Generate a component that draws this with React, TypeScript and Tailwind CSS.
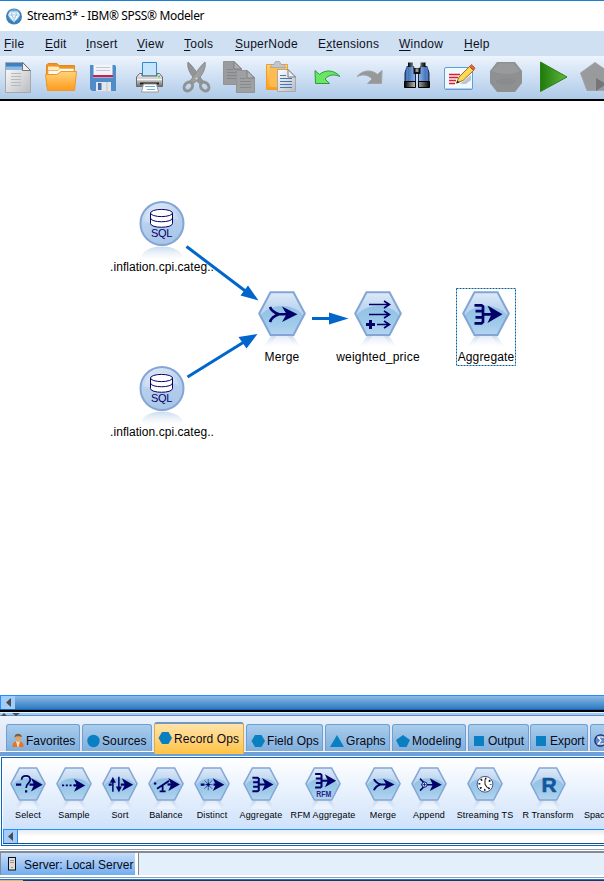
import React from "react";

type Kids = { children?: React.ReactNode };

/* Shared gradients, referenced by id from every drawing on the page. */
function Gradients() {
  return (
    <svg width="0" height="0" className="absolute" aria-hidden="true">
      <defs>
        <linearGradient id="body" x1="0" y1="0" x2="0" y2="1">
          <stop offset="0" stopColor="#dfebf9" />
          <stop offset="0.35" stopColor="#c0d7f0" />
          <stop offset="1" stopColor="#b9d3f0" />
        </linearGradient>
        <linearGradient id="ball" x1="0.3" y1="0" x2="0.6" y2="1">
          <stop offset="0" stopColor="#dde8f8" />
          <stop offset="0.45" stopColor="#b6cfec" />
          <stop offset="1" stopColor="#a9c6e8" />
        </linearGradient>
        <linearGradient id="pool" x1="0" y1="0" x2="0" y2="1">
          <stop offset="0" stopColor="#8fc1e4" />
          <stop offset="0.6" stopColor="#a0cbea" />
          <stop offset="1" stopColor="#b9d5f0" />
        </linearGradient>
        <linearGradient id="mirror" x1="0" y1="0" x2="0" y2="1">
          <stop offset="0" stopColor="#b9cfe8" stopOpacity="0.75" />
          <stop offset="1" stopColor="#dfeaf6" stopOpacity="0" />
        </linearGradient>
        <linearGradient id="paper" x1="0" y1="0" x2="1" y2="1">
          <stop offset="0" stopColor="#ffffff" />
          <stop offset="1" stopColor="#b9bcc0" />
        </linearGradient>
        <linearGradient id="orange" x1="0" y1="0" x2="0" y2="1">
          <stop offset="0" stopColor="#ffd47c" />
          <stop offset="1" stopColor="#ff9a1c" />
        </linearGradient>
        <linearGradient id="green" x1="0" y1="0" x2="1" y2="0">
          <stop offset="0" stopColor="#1e7a0c" />
          <stop offset="1" stopColor="#62b840" />
        </linearGradient>
        <linearGradient id="tube" x1="0" y1="0" x2="1" y2="0">
          <stop offset="0" stopColor="#2a559c" />
          <stop offset="0.5" stopColor="#9cc6f8" />
          <stop offset="1" stopColor="#2a559c" />
        </linearGradient>
        <linearGradient id="rubber" x1="0" y1="0" x2="1" y2="0">
          <stop offset="0" stopColor="#000" />
          <stop offset="0.45" stopColor="#c8c8c8" />
          <stop offset="1" stopColor="#000" />
        </linearGradient>
        <linearGradient id="metal" x1="0" y1="0" x2="0" y2="1">
          <stop offset="0" stopColor="#f3f3f3" />
          <stop offset="0.6" stopColor="#b5b5b5" />
          <stop offset="1" stopColor="#6e6e6e" />
        </linearGradient>
        <clipPath id="hexclip">
          <path d="M12.5 1.2H35.5L46.8 22.5L35.5 44H12.5L1.2 22.5Z" />
        </clipPath>
      </defs>
    </svg>
  );
}

/* ---------- title bar and menu ---------- */

function TitleBar() {
  return (
    <header className="flex h-[31px] shrink-0 items-center border-t border-[#1a7fd6] bg-white pl-1.5">
      <svg width="17" height="17" viewBox="0 0 17 17">
        <circle cx="8" cy="8.5" r="8" fill="#3d7fb8" />
        <circle cx="8" cy="7" r="6" fill="#6aa5d2" />
        <path d="M4.3 3.5H11.7L14 7L8 14.5L2 7Z" fill="#f2f9fd" />
        <path d="M2 7H14M5 3.5L8 14M11 3.5L8 14M8 3.5L5 7L8 10L11 7Z" stroke="#8dbbdd" strokeWidth="0.6" fill="none" />
      </svg>
      <h1 className="ml-1 whitespace-pre font-['Noto_Sans','Open_Sans',sans-serif] text-[12px] leading-none tracking-[-0.34px] text-black">
        Stream3* - IBM® SPSS® Modeler
      </h1>
    </header>
  );
}

function MenuBar() {
  return (
    <nav className="flex h-[25px] shrink-0 items-center bg-[#cee0f2] pl-1 text-[12px] leading-none tracking-[0.25px] text-[#10101c]">
      <span className="w-[41px]"><u className="underline-offset-2">F</u>ile</span>
      <span className="w-[41px]"><u className="underline-offset-2">E</u>dit</span>
      <span className="w-[51px]"><u className="underline-offset-2">I</u>nsert</span>
      <span className="w-[47px]"><u className="underline-offset-2">V</u>iew</span>
      <span className="w-[51px]"><u className="underline-offset-2">T</u>ools</span>
      <span className="w-[83px]"><u className="underline-offset-2">S</u>uperNode</span>
      <span className="w-[81px]">E<u className="underline-offset-2">x</u>tensions</span>
      <span className="w-[65px]"><u className="underline-offset-2">W</u>indow</span>
      <span><u className="underline-offset-2">H</u>elp</span>
    </nav>
  );
}

/* ---------- toolbar ---------- */

/* One toolbar cell; drawings share the toolbar's own x axis. */
function Tool({ x, w, children }: Kids & { x: number; w: number }) {
  return (
    <svg width={w} height={43} viewBox={`${x} 56 ${w} 43`} className="shrink-0">
      {children}
    </svg>
  );
}

function Toolbar() {
  return (
    <div className="flex h-[45px] shrink-0 overflow-hidden border-b-2 border-black bg-linear-to-b from-[#edf4fd] to-[#aecae8]">
      <Tool x={0} w={38}>
        <path d="M5.5 62.5H23L30.5 70.5V92.5H5.5Z" fill="url(#paper)" stroke="#a4a9ae" />
        <path d="M6 63H22.5V70H6Z" fill="#3f7fc4" />
        <path d="M6 66.5H22.5V70H6Z" fill="#8db9e4" />
        <path d="M22.5 62.5V70.5H30.5Z" fill="#f1f1f1" stroke="#666" strokeWidth="0.9" />
        <path d="M11 73.5H21M11 76.5H21M11 79.5H21M11 82.5H21M11 85.5H21" stroke="#b9b9b9" />
      </Tool>
      <Tool x={38} w={46}>
        <path d="M46.5 86V65L48 63.5H57L59 65.5H74.5V84Z" fill="#f0941c" stroke="#d98a20" />
        <path d="M48 66.5H58L60 68.5H74V76H48Z" fill="#ffe9bd" />
        <path d="M48 70.5H58L60 68.5H74V76H48Z" fill="#fffaf0" stroke="#e8a850" strokeWidth="0.8" />
        <path d="M45.5 74.5H57L61 71.5H76.5L74.5 90.5H47.5Z" fill="url(#orange)" stroke="#f0972a" />
      </Tool>
      <Tool x={84} w={42}>
        <path d="M90 65H115L116 66.5V91H92L90 89Z" fill="#4f8cc8" />
        <path d="M93.5 64.5H112.5V76.5H93.5Z" fill="#f1f3f8" />
        <path d="M96 67.5H110M96 70.5H110" stroke="#c2c8d2" />
        <path d="M93 76H113" stroke="#db1648" strokeWidth="2" />
        <path d="M93 77.5H113" stroke="#8fb3da" />
        <path d="M96 82H111V91H96Z" fill="#e4e6ec" />
        <path d="M98 83H101.5V90H98Z" fill="#416fae" />
        <path d="M107 82V91" stroke="#bfc3cb" />
      </Tool>
      <Tool x={126} w={47}>
        <path d="M142.5 62.5H156.5V76H142.5Z" fill="#c4e5fc" stroke="#2f8ad2" />
        <path d="M136.5 77L139.5 73.5H142V76H157V73.5H159.5L162.5 77V86.5H136.5Z" fill="url(#metal)" stroke="#6a6a6a" />
        <path d="M137 79.5H162" stroke="#f4f4f4" strokeWidth="1.5" />
        <path d="M140 83.5H159" stroke="#222" strokeWidth="2" />
        <path d="M143.5 84H156.5L158.5 92H141.5Z" fill="#fff" stroke="#9a9a9a" />
        <path d="M145 86.5H155M147 89.5H155" stroke="#71aee0" />
        <circle cx="159" cy="76.5" r="1" fill="#4cc83c" />
      </Tool>
      <Tool x={173} w={43}>
        <path d="M188 62C186.5 68 191 77 199.5 83.5L203 81C199 76 193 66 188 62Z" fill="#929496" stroke="#8b8d8f" strokeLinejoin="round" />
        <path d="M205 62C206.5 68 202 77 193.5 83.5L190 81C194 76 200 66 205 62Z" fill="#9c9ea0" stroke="#8b8d8f" strokeLinejoin="round" />
        <ellipse cx="188.3" cy="86.5" rx="3.8" ry="4.8" fill="none" stroke="#909294" strokeWidth="3" transform="rotate(38 188.3 86.5)" />
        <ellipse cx="204.7" cy="86.5" rx="3.8" ry="4.8" fill="none" stroke="#909294" strokeWidth="3" transform="rotate(-38 204.7 86.5)" />
        <circle cx="196.5" cy="78.5" r="1" fill="#ddd" />
      </Tool>
      <Tool x={216} w={44}>
        <path d="M223.5 61.5H234L241.5 69V84.5H223.5Z" fill="#9a9b9c" stroke="#929394" />
        <path d="M234 61.5V69H241.5Z" fill="#aeafb0" stroke="#7d7f81" />
        <path d="M227 69.5H233M227 72.5H236M227 75.5H236M227 78.5H236" stroke="#858687" />
        <path d="M236.5 70.5H247L254.5 78V92.5H236.5Z" fill="#9fa0a1" stroke="#929394" />
        <path d="M247 70.5V78H254.5Z" fill="#b2b3b4" stroke="#7d7f81" />
        <path d="M240 78.5H246M240 81.5H251M240 84.5H251M240 87.5H251" stroke="#88898a" />
      </Tool>
      <Tool x={260} w={42}>
        <path d="M266.5 64.5H287.5V89.5H266.5Z" fill="url(#orange)" stroke="#f59a22" />
        <path d="M269.5 67.5H285V87H269.5Z" fill="#ffbb50" />
        <path d="M270 67.5L272 64.5H274L275.5 61.5H279.5L281 64.5H283.5L286 67.5Z" fill="#c3c6c6" stroke="#a2a5a6" strokeWidth="0.8" />
        <path d="M277.5 69.5H288L295.5 77V91.5H277.5Z" fill="url(#paper)" stroke="#a5a9ae" />
        <path d="M288 69.5V77H295.5Z" fill="#eee" stroke="#777d84" />
        <path d="M280 75.5H286M280 78.5H292M280 81.5H292M280 84.5H292M280 87.5H292" stroke="#4277bb" />
      </Tool>
      <Tool x={302} w={48}>
        <path d="M315 70.5L319.5 74.5C325 69.5 334 69.5 340 76.5C334 74 329 74.5 325 79L329.5 83.5H315.5Z" fill="#69e662" stroke="#2f9a43" strokeLinejoin="round" />
      </Tool>
      <Tool x={350} w={43}>
        <path d="M382 70.5L377.5 74.5C372 69.5 363 69.5 357 76.5C363 74 368 74.5 372 79L367.5 83.5H381.5Z" fill="#969899" stroke="#a0a2a4" strokeLinejoin="round" />
      </Tool>
      <Tool x={393} w={44}>
        <path d="M407 66.5H413.5L415.5 73V82H405V73ZM420.5 66.5H427L429 73V82H418.5V73Z" fill="url(#tube)" stroke="#1a2744" />
        <path d="M407 66.5V81M427 66.5V81" stroke="#5b93df" />
        <path d="M413.5 68H420.5V74H413.5Z" fill="#111" />
        <path d="M415.5 68.5H418.5V72H415.5Z" fill="#999" />
        <path d="M408 62.5H413V67H408ZM420.5 62.5H425.5V67H420.5Z" fill="url(#rubber)" />
        <path d="M404.5 81.5H415.5V87.5H404.5ZM418.5 81.5H429.5V87.5H418.5Z" fill="url(#rubber)" stroke="#000" />
      </Tool>
      <Tool x={437} w={45}>
        <rect x="444.5" y="67.5" width="28" height="22" rx="1.5" fill="#f2f8ff" stroke="#5b9fd8" />
        <path d="M446 88.5H472" stroke="#b6cce0" />
        <path d="M449 74.5H460M449 77.5H458M449 80.5H456M449 83.5H455" stroke="#e01d29" strokeWidth="1.3" />
        <path d="M460 84L471 75V80L466 84Z" fill="#a7afb9" opacity="0.7" />
        <path d="M456.5 83L459 77L469.5 66.5L473.5 70.5L463 80.5Z" fill="#ffd755" stroke="#8a650f" strokeWidth="0.9" />
        <path d="M469.5 66.5L471.5 64.5L475 68L473.5 70.5Z" fill="#e5653f" stroke="#a6441f" strokeWidth="0.7" />
        <path d="M456.5 83.5L457.5 80.5L459.5 82.5Z" fill="#222" />
      </Tool>
      <Tool x={482} w={48}>
        <path d="M497 62H515L522 71V83L515 92H497L490 83V71Z" fill="#8f9091" />
        <path d="M498 63.5H514L520 71C512 75 500 75 492 71Z" fill="#999a9b" />
        <path d="M496 81C501 77.5 511 77.5 516 81C515 86 497 86 496 81Z" fill="#8a8b8c" />
      </Tool>
      <Tool x={530} w={44}>
        <path d="M540.5 62L567 77L540.5 91.5Z" fill="url(#green)" stroke="#258413" strokeLinejoin="round" />
      </Tool>
      <Tool x={574} w={30}>
        <path d="M595 62.5L610 73L604 90.5H587L580.5 73Z" fill="#999a9c" stroke="#a0a2a4" strokeLinejoin="round" />
        <path d="M596 78L606 84L596 91Z" fill="#747678" />
      </Tool>
    </div>
  );
}

/* ---------- nodes ---------- */

const NAVY = "#04006a";

type Glyph =
  | "select" | "sample" | "sort" | "balance" | "distinct" | "aggregate"
  | "rfm" | "merge" | "append" | "clock" | "r" | "derive";

/* Four prongs joined by a spine, flowing into one arrow. */
function ProngArrow() {
  return (
    <g>
      <path d="M12.5 14.3H19.5L21 15.5V31L19.5 32.3H12.5M13.5 20.2H21M13.5 26.4H21M21 23.3H32" fill="none" stroke={NAVY} strokeWidth="2.7" />
      <path d="M25.5 14.5L40.5 23.3L25.5 32L29.5 23.3Z" fill={NAVY} />
    </g>
  );
}

function GlyphArt({ kind }: { kind: Glyph }) {
  switch (kind) {
    case "aggregate":
      return <ProngArrow />;
    case "merge":
      return (
        <g>
          <path d="M12 16C13.5 20 17 22 21 23.3C17 24.5 13.5 26.5 12 31M19 23.3H32" fill="none" stroke={NAVY} strokeWidth="2.6" />
          <path d="M24 15.5L39.5 23.3L24 31L28.5 23.3Z" fill={NAVY} />
        </g>
      );
    case "derive":
      return (
        <g fill="none" stroke={NAVY} strokeWidth="1.6">
          <path d="M15 13.5H35M30 10L35.5 13.5L30 17M15 23.5H35M30 20L35.5 23.5L30 27M23 33.5H35M30 30L35.5 33.5L30 37" />
          <path d="M12 33.5H21M16.5 29V38" strokeWidth="3" />
        </g>
      );
    case "select":
      return (
        <g>
          <path d="M8 23.5H15M26 23.5H35" stroke={NAVY} strokeWidth="2.8" />
          <path d="M15.5 17C15.5 10 27 10 27 17C27 21.5 21.5 21.5 21.5 28" fill="none" stroke={NAVY} strokeWidth="2.3" />
          <path d="M20 31H23V34H20Z" fill={NAVY} />
          <path d="M28 14.5L43.5 23.5L28 32.5L32 23.5Z" fill={NAVY} />
        </g>
      );
    case "sample":
      return (
        <g>
          <path d="M8 24.5H25" stroke={NAVY} strokeWidth="2.6" strokeDasharray="2.8 2.2" />
          <path d="M24 24.5H34" stroke={NAVY} strokeWidth="3" />
          <path d="M24 16L39 24.5L24 33L28 24.5Z" fill={NAVY} />
        </g>
      );
    case "sort":
      return (
        <g>
          <path d="M9 23.5H13M25 23.5H34" stroke={NAVY} strokeWidth="3" />
          <path d="M14.5 33V18M22.5 13V30" stroke={NAVY} strokeWidth="2" />
          <path d="M10.5 21L14.5 13L18.5 21ZM18.5 26L22.5 34L26.5 26Z" fill={NAVY} />
          <path d="M26.5 15L41.5 23.5L26.5 32L30.5 23.5Z" fill={NAVY} />
        </g>
      );
    case "balance":
      return (
        <g>
          <circle cx="9.5" cy="22" r="1.7" fill={NAVY} />
          <path d="M12 29L28 18.5M19.5 25V32M15.5 32.5H23.5" fill="none" stroke={NAVY} strokeWidth="2.4" />
          <path d="M26 23.3H34" stroke={NAVY} strokeWidth="3" />
          <path d="M27 14.5L42.5 23.3L27 32L31 23.3Z" fill={NAVY} />
        </g>
      );
    case "distinct":
      return (
        <g>
          <path d="M9 23.5H14M26 23.5H34" stroke={NAVY} strokeWidth="2.8" />
          <path d="M19 16V31M13 23.5H25M14 18L24 29M24 18L14 29" stroke="#3c55a6" strokeWidth="1.3" />
          <path d="M19 21V26M16.5 23.5H21.5" stroke={NAVY} strokeWidth="1.5" />
          <path d="M25 15L40.5 23.5L25 32L29 23.5Z" fill={NAVY} />
        </g>
      );
    case "rfm":
      return (
        <g>
          <g transform="translate(1 -5)">
            <ProngArrow />
          </g>
          <text x="25" y="40" textAnchor="middle" fontSize="11.5" fontWeight="bold" fill="#2a1f8c" textLength="20" lengthAdjust="spacingAndGlyphs">RFM</text>
        </g>
      );
    case "append":
      return (
        <g>
          <path d="M12 15.5L20 23.5L12 31.5M14 23.5H34" fill="none" stroke={NAVY} strokeWidth="2" />
          <circle cx="18" cy="23.5" r="3.5" fill="#dcebf8" stroke={NAVY} strokeWidth="1.2" />
          <path d="M18 21V26M15.5 23.5H20.5" stroke={NAVY} strokeWidth="1" />
          <path d="M25 15L41 23.5L25 32L29 23.5Z" fill={NAVY} />
        </g>
      );
    case "clock":
      return (
        <g>
          <circle cx="24" cy="23" r="10.5" fill="#fff" stroke="#3c4386" strokeWidth="1.2" />
          <circle cx="24" cy="23" r="7.5" fill="none" stroke="#111" strokeWidth="2.6" strokeDasharray="2 3.89" strokeDashoffset="1" />
          <path d="M24 16.5V23L27.5 28" fill="none" stroke="#222" strokeWidth="1.4" />
        </g>
      );
    case "r":
      return (
        <text x="25.5" y="33" textAnchor="middle" fontSize="28" fontWeight="bold" fill="#14569c" stroke="#14569c" strokeWidth="0.7">R</text>
      );
  }
}

function HexNode({ kind, width = 48 }: { kind: Glyph; width?: number }) {
  return (
    <svg width={width} height={(width * 56) / 48} viewBox="0 0 48 56" className="shrink-0">
      <path d="M13 45H35L43 56H5Z" fill="url(#mirror)" />
      <path d="M18 45H30L37 56H11Z" fill="#fff" opacity="0.45" />
      <path d="M12.5 1.2H35.5L46.8 22.5L35.5 44H12.5L1.2 22.5Z" fill="url(#body)" />
      <ellipse cx="24" cy="30" rx="23" ry="15" fill="url(#pool)" clipPath="url(#hexclip)" />
      <path d="M12.5 1.2H35.5L46.8 22.5L35.5 44H12.5L1.2 22.5Z" fill="none" stroke="#83a5d6" strokeWidth="2" />
      <GlyphArt kind={kind} />
    </svg>
  );
}

function SqlNode() {
  return (
    <svg width="46" height="59" viewBox="0 0 46 59">
      <path d="M2 56C6 42 40 42 44 56L40 59H6Z" fill="url(#mirror)" />
      <circle cx="23" cy="22.5" r="21.5" fill="url(#ball)" stroke="#84a6d6" strokeWidth="2" />
      <path d="M5 20C8 2 37 2 40 20C30 13 15 26 5 20Z" fill="#fff" opacity="0.22" />
      <path d="M11.5 12V22.5C11.5 27.5 33.5 27.5 33.5 22.5V12Z" fill="#fff" stroke={NAVY} />
      <path d="M11.5 17C11.5 22 33.5 22 33.5 17" fill="none" stroke={NAVY} />
      <ellipse cx="22.5" cy="12" rx="11" ry="3.6" fill="#fff" stroke={NAVY} />
      <text x="12" y="36" fontSize="11" fill={NAVY} textLength="21.5">SQL</text>
    </svg>
  );
}

function CanvasNode({ place, label, children }: Kids & { place: string; label: string }) {
  return (
    <div className={`absolute flex w-[120px] flex-col items-center ${place}`}>
      {children}
      <span className="whitespace-nowrap text-[12px] leading-[14px] text-black">{label}</span>
    </div>
  );
}

function StreamCanvas() {
  return (
    <main className="relative h-[594px] shrink-0 overflow-hidden bg-white">
      <CanvasNode place="left-[102px] top-[100px] tracking-[0.05px]" label=".inflation.cpi.categ.."><SqlNode /></CanvasNode>
      <CanvasNode place="left-[102px] top-[265px] tracking-[0.05px]" label=".inflation.cpi.categ.."><SqlNode /></CanvasNode>
      <CanvasNode place="left-[222px] top-[190px] gap-[3px] tracking-[0.15px]" label="Merge"><HexNode kind="merge" /></CanvasNode>
      <CanvasNode place="left-[318px] top-[190px] gap-[3px] tracking-[0.2px]" label="weighted_price"><HexNode kind="derive" /></CanvasNode>
      <CanvasNode place="left-[426px] top-[190px] gap-[3px] tracking-[0.15px]" label="Aggregate"><HexNode kind="aggregate" /></CanvasNode>
      <svg className="absolute left-0 top-0" width="604" height="594" viewBox="0 101 604 594">
        <g stroke="#0066cc" strokeWidth="3" fill="#0066cc">
          <path d="M186.5 246.5L246 291.5M187.5 377L244 342M312 318.5H332" />
          <path stroke="none" d="M258.5 300.5L240.5 295.5L248 285.5ZM257.5 334L246.5 348.5L238.5 337ZM348.5 318.5L329 324.5V312.5Z" />
        </g>
        <rect x="456.5" y="288.5" width="59" height="77" fill="none" stroke="#005f9e" strokeDasharray="2 1" />
      </svg>
    </main>
  );
}

/* ---------- palette ---------- */

function HorizontalScroll() {
  return (
    <div className="flex h-[17px] shrink-0 flex-col">
      <div className="flex h-[15px] border-b border-t border-b-[#1764b4] border-t-[#1e90ff] bg-linear-to-b from-[#8dbbe6] via-[#5b9bd5] to-[#2f78bd]">
        <div className="flex w-[15px] items-center justify-center border-l border-[#1e90ff] bg-[#a3cdf8]">
          <svg width="5" height="9" viewBox="0 0 5 9"><path d="M0 4.5L5 0V9Z" fill="#4b4b50" /></svg>
        </div>
      </div>
      <div className="h-[2px] bg-black" />
    </div>
  );
}

function Divider() {
  return (
    <div className="flex h-1 shrink-0 items-start border-b border-t border-b-[#5d91c6] border-t-[#e8f4ff] bg-[#9dcbfb]">
      <svg width="22" height="3" viewBox="0 0 22 3" className="shrink-0">
        <path d="M1 3L4 0L7 3ZM12 0H20L16 3Z" fill="#4a4a50" />
      </svg>
    </div>
  );
}

type TabShape = "person" | "circle" | "hexagon" | "triangle" | "pentagon" | "square";

function TabIcon({ shape }: { shape: TabShape }) {
  const blue = "#0a7fc2";
  if (shape === "person")
    return (
      <svg width="12" height="15" viewBox="0 0 12 15" className="shrink-0">
        <path d="M0.5 14C0 10 3 8 6 8C9 8 12 10 11.5 14Z" fill="#e77420" />
        <path d="M4 8H8L6.5 14H5.5Z" fill="#ffe2c4" />
        <path d="M3 4C3 0.5 9.2 0.5 9.2 4C9.2 7 7.5 9 6.2 9C4.8 9 3 7 3 4Z" fill="#dba56d" />
        <path d="M2.6 4.5C2 -0.5 10.300 -0.5 9.700 4.5C8.700 2.800 4 2.800 2.6 4.5Z" fill="#75604b" />
      </svg>
    );
  return (
    <svg width="14" height="14" viewBox="0 0 14 14" className="shrink-0">
      {shape === "circle" && <circle cx="7.5" cy="7" r="6.2" fill={blue} />}
      {shape === "hexagon" && <path d="M4 1H10.5L14 7L10.5 13H4L0.5 7Z" fill={blue} />}
      {shape === "triangle" && <path d="M7 1L14 13H0Z" fill={blue} />}
      {shape === "pentagon" && <path d="M7 1L14 6L10.5 13H3.5L0 6Z" fill={blue} />}
      {shape === "square" && <path d="M2 2H12V12H2Z" fill={blue} />}
    </svg>
  );
}

function Tab({ size, shape, label }: { size: string; shape: TabShape; label: string }) {
  return (
    <div className={`flex h-[27px] shrink-0 items-center rounded-t-[3px] border-x border-t border-[#6c9fd3] bg-linear-to-b from-[#a9cdec] to-[#80aedb] pt-[5px] ${size}`}>
      <TabIcon shape={shape} />
      <span className="ml-0.5 whitespace-nowrap pt-px">{label}</span>
    </div>
  );
}

function PaletteTabs() {
  return (
    <div className="relative flex h-[41px] shrink-0 flex-col bg-linear-to-b from-[#e9f1fb] to-[#dadff0]">
      <div className="flex h-[35px] items-end overflow-hidden pl-1.5 text-[12px] leading-none text-[#080818]">
        <Tab size="w-[74px] pl-[5px]" shape="person" label="Favorites" />
        <Tab size="w-[70px] ml-0.5 pl-[3px] tracking-[0.1px]" shape="circle" label="Sources" />
        <div className="w-[94px] shrink-0" />
        <Tab size="w-[77px] pl-1 tracking-[0.05px]" shape="hexagon" label="Field Ops" />
        <Tab size="w-[65px] ml-0.5 pl-[4px] tracking-[0.05px]" shape="triangle" label="Graphs" />
        <Tab size="w-[74px] ml-0.5 pl-[3px] tracking-[0.1px]" shape="pentagon" label="Modeling" />
        <Tab size="w-[61px] ml-0.5 pl-[3px]" shape="square" label="Output" />
        <Tab size="w-[58px] ml-px pl-[3px]" shape="square" label="Export" />
        <div className="ml-0.5 flex h-[27px] w-[40px] shrink-0 items-center rounded-t-[3px] border border-b-0 border-[#6c9fd3] bg-linear-to-b from-[#a9cdec] to-[#80aedb] pl-[3px] pt-[5px]">
          <svg width="13" height="13" viewBox="0 0 13 13">
            <circle cx="6.5" cy="6.5" r="5.7" fill="#5f87c8" stroke="#17307c" strokeWidth="1.3" />
            <path d="M9 4V3H4L7 6.5L4 10H9V9" fill="none" stroke="#fff" strokeWidth="1.2" />
          </svg>
        </div>
      </div>
      <div className="h-px bg-white" />
      <div className="h-1 bg-[#70a1d6]" />
      <div className="h-px bg-white" />
      <div className="absolute left-[154px] top-[6px] flex h-[32px] w-[90px] items-center rounded-t-[3px] border-x border-t-2 border-x-[#d6ad50] border-t-[#7299bd] bg-linear-to-b from-[#fee3a8] to-[#ffc340] pb-[3px] pl-[3px] text-[12px] leading-none tracking-[0.1px] text-[#080818]">
        <TabIcon shape="hexagon" />
        <span className="ml-0.5 whitespace-nowrap pt-[2px]">Record Ops</span>
      </div>
    </div>
  );
}

function PaletteNode({ size, kind, label }: { size: string; kind: Glyph; label: string }) {
  return (
    <div className={`flex shrink-0 flex-col items-center ${size}`}>
      <HexNode kind={kind} width={36} />
      <span className="whitespace-nowrap pt-px text-[9px] leading-[10px] tracking-[0.15px] text-black">{label}</span>
    </div>
  );
}

function Palette() {
  return (
    <section className="flex h-[92px] shrink-0 flex-col bg-white pl-px">
      <div className="flex h-[89px] flex-col border-y border-l border-[#0a66c2] bg-white">
        <div className="ml-px flex h-[71px] items-start overflow-hidden bg-linear-to-b from-white to-[#cfe2fb] pl-0.5 pt-[9px]">
          <PaletteNode size="w-[46px]" kind="select" label="Select" />
          <PaletteNode size="w-[46px]" kind="sample" label="Sample" />
          <PaletteNode size="w-[46px]" kind="sort" label="Sort" />
          <PaletteNode size="w-[46px]" kind="balance" label="Balance" />
          <PaletteNode size="w-[46px]" kind="distinct" label="Distinct" />
          <PaletteNode size="w-[52px]" kind="aggregate" label="Aggregate" />
          <PaletteNode size="w-[72px]" kind="rfm" label="RFM Aggregate" />
          <PaletteNode size="w-[48px]" kind="merge" label="Merge" />
          <PaletteNode size="w-[44px]" kind="append" label="Append" />
          <PaletteNode size="w-[68px]" kind="clock" label="Streaming TS" />
          <PaletteNode size="w-[58px]" kind="r" label="R Transform" />
          <span className="ml-[7px] mt-[43px] whitespace-nowrap text-[9px] leading-[10px] text-black">Spac</span>
        </div>
        <div className="ml-px flex h-[15px] border-b border-t border-b-[#174f82] border-t-[#1e90ff] bg-linear-to-b from-[#e9eaec] via-white to-white">
          <div className="flex w-[15px] items-center justify-center border-x border-[#1e90ff] bg-[#a3cdf8]">
            <svg width="5" height="9" viewBox="0 0 5 9"><path d="M0 4.5L5 0V9Z" fill="#4b4b50" /></svg>
          </div>
        </div>
      </div>
    </section>
  );
}

function StatusBar() {
  return (
    <footer className="flex h-8 shrink-0 flex-col bg-white">
      <div className="h-px bg-[#8f9fb2]" />
      <div className="h-px bg-white" />
      <div className="flex h-[25px] items-start border-t-2 border-[#878b91]">
        <div className="flex h-[22px] w-[135px] shrink-0 items-center border-l border-[#878b91] bg-linear-to-b from-[#c5dcfa] to-[#70adf0] pl-[7px]">
          <svg width="9" height="14" viewBox="0 0 9 14" className="shrink-0">
            <rect x="0.5" y="0.5" width="7" height="12.5" fill="#ddd" stroke="#111" />
            <path d="M2 3.5H6M2 5.5H6" stroke="#999" />
            <path d="M3 10.5H5" stroke="#999" />
          </svg>
          <span className="ml-[7px] whitespace-nowrap pt-px text-[12px] leading-none text-[#0a0a14]">Server: Local Server</span>
        </div>
        <div className="ml-[3px] h-[22px] flex-1 border-l border-[#878b91] bg-[#e3effb]" />
      </div>
      <div className="h-px bg-white" />
      <div className="h-px bg-[#8f9fb2]" />
      <div className="h-px bg-white" />
      <div className="h-px bg-[#1a77d0]" />
      <div className="flex h-px bg-[#103a66]"><div className="w-[23px] bg-[#d7bb66]" /></div>
    </footer>
  );
}

export default function App() {
  return (
    <div className="flex h-[881px] w-[604px] flex-col overflow-hidden bg-white font-['Liberation_Sans',Arial,sans-serif]">
      <Gradients />
      <TitleBar />
      <MenuBar />
      <Toolbar />
      <StreamCanvas />
      <HorizontalScroll />
      <Divider />
      <PaletteTabs />
      <Palette />
      <StatusBar />
    </div>
  );
}
